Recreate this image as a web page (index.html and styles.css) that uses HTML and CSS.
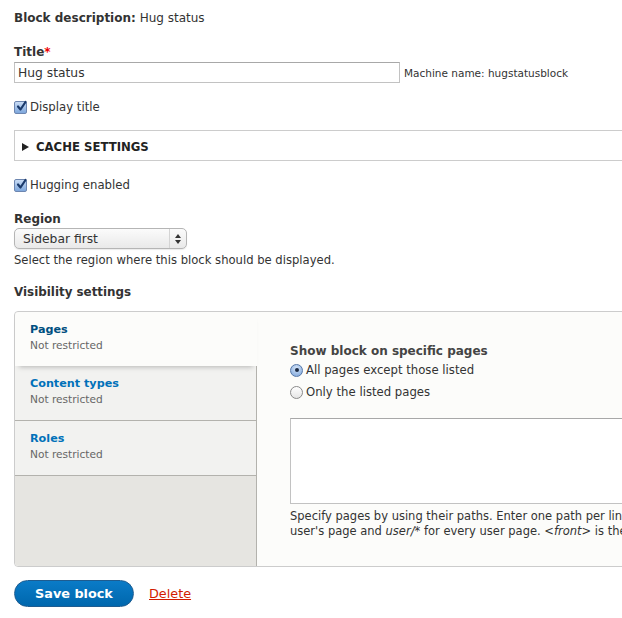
FILE: index.html
```html
<!DOCTYPE html>
<html>
<head>
<meta charset="utf-8">
<link rel="stylesheet" href="styles.css">
</head>
<body>
<div class="page">
  <form class="form">
    <div class="item desc-item"><strong>Block description:</strong> Hug status</div>

    <div class="item title-item">
      <label class="label">Title<span class="req">*</span></label>
      <div class="title-row">
        <div class="text-input">Hug status</div>
        <span class="machine">Machine name: hugstatusblock</span>
      </div>
    </div>

    <div class="item check-item">
      <span class="check"><svg width="13" height="13" viewBox="0 0 13 13"><path d="M3 6.5 L5.5 9.5 L10.5 2" fill="none" stroke="#1b3a6b" stroke-width="2.2" stroke-linecap="round" stroke-linejoin="round"/></svg></span>
      <span>Display title</span>
    </div>

    <div class="details">
      <div class="summary"><span class="tri"></span>CACHE SETTINGS</div>
    </div>

    <div class="item check-item hug">
      <span class="check"><svg width="13" height="13" viewBox="0 0 13 13"><path d="M3 6.5 L5.5 9.5 L10.5 2" fill="none" stroke="#1b3a6b" stroke-width="2.2" stroke-linecap="round" stroke-linejoin="round"/></svg></span>
      <span>Hugging enabled</span>
    </div>

    <div class="item region-item">
      <label class="label">Region</label>
      <div class="select">
        <span class="select-text">Sidebar first</span>
        <span class="select-arrows"><svg width="8" height="12" viewBox="0 0 8 12"><path d="M4 1 L7 5 L1 5 Z M4 11 L7 7 L1 7 Z" fill="#333"/></svg></span>
      </div>
      <div class="description">Select the region where this block should be displayed.</div>
    </div>

    <div class="vis-label">Visibility settings</div>

    <div class="vtabs">
      <ul class="vtabs-menu">
        <li class="vtab selected"><span class="vtab-title">Pages</span><span class="vtab-summary">Not restricted</span></li>
        <li class="vtab"><span class="vtab-title">Content types</span><span class="vtab-summary">Not restricted</span></li>
        <li class="vtab"><span class="vtab-title">Roles</span><span class="vtab-summary">Not restricted</span></li>
      </ul>
      <div class="vtabs-pane">
        <div class="pane-label">Show block on specific pages</div>
        <div class="radio-row"><span class="radio on"><span class="dot"></span></span>All pages except those listed</div>
        <div class="radio-row"><span class="radio"></span>Only the listed pages</div>
        <div class="textarea"></div>
        <div class="pane-desc">Specify pages by using their paths. Enter one path per line.<br>user's page and <em>user/*</em> for every user page. <em>&lt;front&gt;</em> is the front page.</div>
      </div>
    </div>

    <div class="actions">
      <span class="button">Save block</span>
      <a class="delete" href="#">Delete</a>
    </div>
  </form>
</div>
</body>
</html>
```
FILE: styles.css
```css
html, body {
  margin: 0;
  padding: 0;
  background: #fff;
  overflow: hidden;
}
body {
  font-family: "DejaVu Sans", "Noto Sans", sans-serif;
  font-size: 11.7px;
  color: #333;
}
.page {
  width: 622px;
  height: 618px;
  overflow: hidden;
}
.form {
  width: 760px;
  padding: 10px 0 0 14px;
}
.item { margin: 0; }
.desc-item {
  font-size: 12px;
  line-height: 17px;
}
.desc-item strong { font-weight: bold; }
.title-item { margin-top: 17px; }
.label {
  display: block;
  font-weight: bold;
  font-size: 12px;
  line-height: 16px;
}
.req { color: #e00; }
.title-row {
  display: flex;
  align-items: center;
  margin-top: 2px;
}
.text-input {
  box-sizing: border-box;
  width: 386px;
  height: 21px;
  border: 1px solid #c2c2c2;
  border-top-color: #a8a8a8;
  padding: 0 3px;
  font-size: 12.3px;
  line-height: 20px;
  color: #333;
}
.machine {
  margin-left: 4px;
  font-size: 10.5px;
}
.check-item {
  display: flex;
  align-items: center;
  margin-top: 16px;
  font-size: 11.7px;
  line-height: 16px;
}
.check {
  box-sizing: border-box;
  width: 13px;
  height: 13px;
  border: 1px solid #6d86b0;
  border-radius: 2px;
  background: linear-gradient(#c9dcf5, #7ea7dc);
  margin-right: 3px;
  display: inline-flex;
  position: relative;
  flex-shrink: 0;
}
.check svg {
  position: absolute;
  left: 0;
  top: -2px;
}
.details {
  box-sizing: border-box;
  margin-top: 15px;
  border: 1px solid #ccc;
  height: 31px;
}
.summary {
  display: flex;
  align-items: center;
  height: 31px;
  padding-left: 7px;
  font-weight: bold;
  font-size: 11.7px;
  color: #222;
}
.tri {
  width: 0;
  height: 0;
  border-left: 7px solid #222;
  border-top: 4px solid transparent;
  border-bottom: 4px solid transparent;
  margin-right: 7px;
}
.hug { margin-top: 16px; }
.region-item { margin-top: 18px; }
.select {
  box-sizing: border-box;
  margin-top: 1px;
  width: 173px;
  height: 21px;
  border: 1px solid #b5b5b5;
  border-radius: 5px;
  background: linear-gradient(#fbfbfb, #e9e9e9);
  display: flex;
  align-items: center;
  box-shadow: 0 1px 1px rgba(0,0,0,0.08);
}
.select-text {
  flex: 1;
  padding-left: 8px;
  font-size: 12.3px;
}
.select-arrows {
  width: 16px;
  height: 19px;
  border-left: 1px solid #d4d4d4;
  display: flex;
  align-items: center;
  justify-content: center;
}
.description {
  margin-top: 4px;
  font-size: 11.6px;
  line-height: 15px;
}
.vis-label {
  margin-top: 16px;
  font-weight: bold;
  font-size: 11.9px;
  line-height: 16px;
}
.vtabs {
  box-sizing: border-box;
  margin-top: 11px;
  width: 700px;
  height: 256px;
  border: 1px solid #ccc;
  border-radius: 4px 0 0 4px;
  background: #fcfcfa;
  display: flex;
  position: relative;
}
.vtabs-menu {
  list-style: none;
  margin: 0;
  padding: 0;
  width: 241px;
  flex-shrink: 0;
  background: #e6e5e1;
  border-right: 1px solid #b3b2ad;
  border-radius: 4px 0 0 4px;
}
.vtab {
  box-sizing: border-box;
  height: 55px;
  padding: 10px 15px 0 15px;
  background: #f2f2f0;
  border-bottom: 1px solid #b3b2ad;
  display: flex;
  flex-direction: column;
}
.vtab.selected {
  background: #fcfcfa;
  margin-right: -1px;
  border-bottom: none;
  height: 54px;
  border-radius: 4px 0 0 0;
  box-shadow: 0 5px 5px -4px rgba(0,0,0,0.25);
  position: relative;
  z-index: 1;
}
.vtab-title {
  font-weight: bold;
  font-size: 11.2px;
  line-height: 15px;
  color: #0071b9;
}
.selected .vtab-title { color: #004f80; }
.vtab-summary {
  margin-top: 1px;
  font-size: 10.6px;
  line-height: 14px;
  color: #666;
}
.vtabs-pane {
  flex: 1;
  padding: 31px 0 0 33px;
}
.pane-label {
  font-weight: bold;
  font-size: 12px;
  line-height: 16px;
  color: #444;
}
.radio-row {
  display: flex;
  align-items: center;
  height: 22px;
  font-size: 11.7px;
}
.radio {
  box-sizing: border-box;
  width: 13px;
  height: 13px;
  border-radius: 50%;
  border: 1px solid #8a8a8a;
  background: linear-gradient(#fff, #e5e5e5);
  margin-right: 3px;
  display: inline-flex;
  align-items: center;
  justify-content: center;
}
.radio.on {
  border-color: #5677a8;
  background: radial-gradient(circle at 50% 30%, #d4e4f8, #7aa3da);
}
.dot {
  width: 4px;
  height: 4px;
  border-radius: 50%;
  background: #1b2a44;
}
.textarea {
  box-sizing: border-box;
  margin-top: 15px;
  width: 480px;
  height: 86px;
  border: 1px solid #c2c2c2;
  border-top-color: #a8a8a8;
  background: #fff;
}
.pane-desc {
  margin-top: 5px;
  font-size: 11.5px;
  line-height: 15px;
  white-space: nowrap;
}
.actions {
  display: flex;
  align-items: center;
  margin-top: 13px;
}
.button {
  box-sizing: border-box;
  width: 120px;
  height: 27px;
  border-radius: 14px;
  background: linear-gradient(#0a7bc7, #0067ad);
  border: 1px solid #1e5c90;
  color: #fff;
  font-weight: bold;
  font-size: 12.8px;
  display: flex;
  align-items: center;
  justify-content: center;
}
.delete {
  margin-left: 15px;
  color: #d21c00;
  font-size: 12.8px;
  text-decoration: underline;
}
```
